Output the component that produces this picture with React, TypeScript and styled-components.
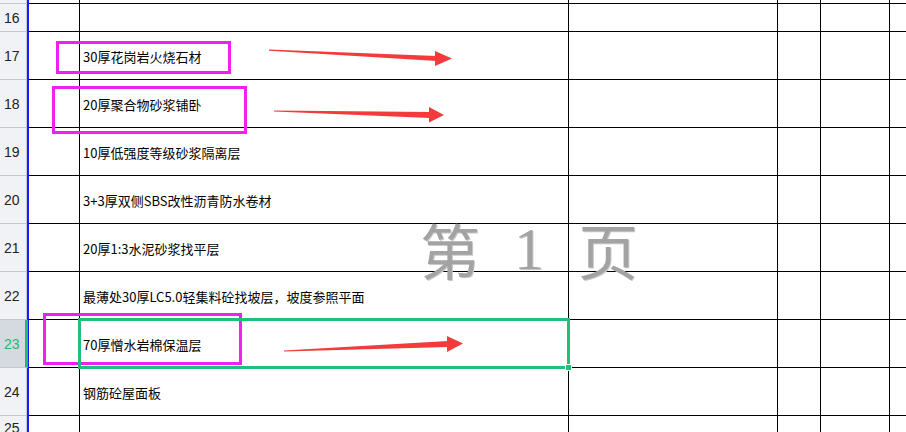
import React from "react";
import styled, { createGlobalStyle } from "styled-components";

const GlobalStyle = createGlobalStyle`
  html, body { margin: 0; padding: 0; background: #ffffff; }
  * { box-sizing: border-box; }
`;

const Sheet = styled.div`
  position: relative;
  width: 906px;
  height: 432px;
  overflow: hidden;
  background: #ffffff;
  font-family: "Noto Sans CJK SC", "Noto Sans", sans-serif;
`;

const Rows = styled.div`
  display: flex;
  flex-direction: column;
`;

const Row = styled.div<{ $h: number }>`
  display: grid;
  grid-template-columns: 27px 2px 51px 489px 209px 43px 69px 1fr;
  height: ${(p) => p.$h}px;
  flex: none;
`;

const HeaderCell = styled.div<{ $sel?: boolean }>`
  display: flex;
  align-items: center;
  padding-left: 4px;
  background: ${(p) => (p.$sel ? "#d5d9e0" : "#f1f2f5")};
  border-right: ${(p) => (p.$sel ? "3px solid #22b877" : "1px solid #c3c8d1")};
  margin-right: ${(p) => (p.$sel ? "-1px" : "0")};
  border-bottom: 1px solid #c3c8d1;
  color: ${(p) => (p.$sel ? "#22b877" : "#222222")};
  font-family: "Liberation Sans", Arial, sans-serif;
  font-size: 14px;
  line-height: 1;
  overflow: hidden;
  position: relative;
  z-index: 1;
`;

const Divider = styled.div`
  background: #1a1aff;
`;

const Cell = styled.div<{ $last?: boolean }>`
  display: flex;
  align-items: center;
  padding-left: 3px;
  padding-top: 2px;
  border-right: ${(p) => (p.$last ? "none" : "1px solid #000000")};
  border-bottom: 1px solid #000000;
  font-size: 13px;
  color: #000000;
  white-space: nowrap;
  overflow: visible;
`;

const Mark = styled.div<{ $x: number; $y: number; $w: number; $h: number }>`
  position: absolute;
  left: ${(p) => p.$x}px;
  top: ${(p) => p.$y}px;
  width: ${(p) => p.$w}px;
  height: ${(p) => p.$h}px;
  border: 3px solid #f020f0;
  pointer-events: none;
`;

const Selection = styled.div`
  position: absolute;
  left: 78px;
  top: 318px;
  width: 492px;
  height: 51px;
  border: 3px solid #21bf7c;
  pointer-events: none;
`;

const Handle = styled.div`
  position: absolute;
  right: -5px;
  bottom: -5px;
  width: 7px;
  height: 7px;
  background: #21bf7c;
  border: 1px solid #ffffff;
`;

const Overlay = styled.svg`
  position: absolute;
  left: 0;
  top: 0;
  width: 906px;
  height: 432px;
  pointer-events: none;
`;

const Watermark = styled.div`
  position: absolute;
  left: 420px;
  top: 214px;
  display: flex;
  align-items: center;
  gap: 34px;
  color: #a3a3a3;
  font-size: 60px;
  line-height: 70px;
  text-shadow: 1px 1px 0 #c8c8c8;
  pointer-events: none;
`;

const Digit = styled.span`
  font-family: "Liberation Serif", "Times New Roman", serif;
  font-size: 60px;
`;

type RowData = { n: string; h: number; text?: string; sel?: boolean };

const rows: RowData[] = [
  { n: "", h: 4 },
  { n: "16", h: 28 },
  { n: "17", h: 48, text: "30厚花岗岩火烧石材" },
  { n: "18", h: 48, text: "20厚聚合物砂浆铺卧" },
  { n: "19", h: 48, text: "10厚低强度等级砂浆隔离层" },
  { n: "20", h: 48, text: "3+3厚双侧SBS改性沥青防水卷材" },
  { n: "21", h: 48, text: "20厚1:3水泥砂浆找平层" },
  { n: "22", h: 48, text: "最薄处30厚LC5.0轻集料砼找坡层，坡度参照平面" },
  { n: "23", h: 48, text: "70厚憎水岩棉保温层", sel: true },
  { n: "24", h: 48, text: "钢筋砼屋面板" },
  { n: "25", h: 25 },
];

const arrows = [
  { shaft: "269,49.5 437,56 437,61 269,50.8", head: "435,51 452,58.5 435,66" },
  { shaft: "274,110.5 430,112 430,118 274,111.6", head: "429,107 444,115 429,122.5" },
  { shaft: "284,350.5 448,341 448,347 284,351.6", head: "447,336 463,343.5 447,352" },
];

export default function App() {
  return (
    <>
      <GlobalStyle />
      <Sheet>
        <Rows>
          {rows.map((r, i) => (
            <Row key={i} $h={r.h}>
              <HeaderCell $sel={r.sel}>{r.n}</HeaderCell>
              <Divider />
              <Cell />
              <Cell>{r.text ?? ""}</Cell>
              <Cell />
              <Cell />
              <Cell />
              <Cell $last />
            </Row>
          ))}
        </Rows>

        <Watermark>
          <span>第</span>
          <Digit>1</Digit>
          <span>页</span>
        </Watermark>

        <Mark $x={56} $y={41} $w={175} $h={33} />
        <Mark $x={52} $y={86} $w={195} $h={48} />
        <Mark $x={43} $y={313} $w={199} $h={52} />

        <Selection>
          <Handle />
        </Selection>

        <Overlay viewBox="0 0 906 432">
          {arrows.map((a, i) => (
            <g key={i} fill="#f43b3b">
              <polygon points={a.shaft} />
              <polygon points={a.head} />
            </g>
          ))}
        </Overlay>
      </Sheet>
    </>
  );
}
